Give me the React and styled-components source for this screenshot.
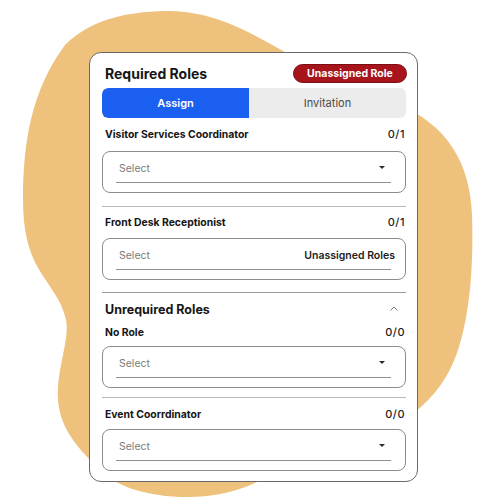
import React from "react";
import styled, { createGlobalStyle } from "styled-components";

const GlobalStyle = createGlobalStyle`
  html, body {
    margin: 0;
    padding: 0;
    background: #ffffff;
  }
  body {
    font-family: Inter, "Noto Sans", Arial, sans-serif;
    color: #1d1d1d;
  }
`;

const Stage = styled.div`
  position: relative;
  width: 500px;
  height: 500px;
  overflow: hidden;
  background: #ffffff;
  padding: 52px 0 0 89px;
  box-sizing: border-box;
`;

const Blob = styled.svg`
  position: absolute;
  left: 0;
  top: 0;
  width: 500px;
  height: 500px;
`;

const Card = styled.div`
  position: relative;
  width: 329px;
  box-sizing: border-box;
  background: #ffffff;
  border: 1px solid #6a6a6a;
  border-radius: 12px;
  padding: 10px 11px 10px 12px;
  display: flex;
  flex-direction: column;
`;

const Header = styled.div`
  height: 20px;
  display: flex;
  align-items: center;
  justify-content: space-between;
`;

const Title = styled.h1`
  margin: 0 0 0 3px;
  font-size: 14px;
  font-weight: 700;
  color: #161616;
`;

const Badge = styled.span`
  height: 19px;
  width: 114px;
  box-sizing: border-box;
  margin-right: -1px;
  border-radius: 10px;
  background: #a8141c;
  border: 1px solid #7e0d12;
  color: #ffffff;
  font-size: 10.5px;
  font-weight: 700;
  display: flex;
  align-items: center;
  justify-content: center;
`;

const Tabs = styled.div`
  margin-top: 5px;
  height: 30px;
  display: grid;
  grid-template-columns: 147px 1fr;
  border-radius: 6px;
  overflow: hidden;
  background: #ececec;
`;

const Tab = styled.div`
  display: flex;
  align-items: center;
  justify-content: center;
  font-size: 11px;
  font-weight: ${(p) => (p.active ? 600 : 400)};
  color: ${(p) => (p.active ? "#ffffff" : "#4a4a4a")};
  background: ${(p) => (p.active ? "#1b60f1" : "transparent")};
  border-radius: ${(p) => (p.active ? "6px 0 0 6px" : "0")};
`;

const RoleRow = styled.div`
  margin-top: ${(p) => p.mt || 9}px;
  height: 14px;
  padding: 0 1px 0 3px;
  display: flex;
  align-items: center;
  justify-content: space-between;
`;

const RoleName = styled.span`
  font-size: 10.4px;
  font-weight: 700;
  color: #161616;
`;

const Count = styled.span`
  font-size: 11px;
  font-weight: 500;
  color: #222;
  letter-spacing: 0.5px;
`;

const SelectBox = styled.div`
  margin-top: ${(p) => p.mt || 9}px;
  height: 42px;
  box-sizing: border-box;
  border: 1px solid #8c8c8c;
  border-radius: 8px;
  padding: 9px 14px 0 13px;
`;

const Field = styled.div`
  height: 14px;
  border-bottom: 1px solid #8f8f8f;
  display: flex;
  align-items: center;
  justify-content: space-between;
  padding: 0 0 7px 3px;
`;

const Placeholder = styled.span`
  font-size: 10.5px;
  color: #7a7a7a;
`;

const Hint = styled.span`
  font-size: 10.5px;
  font-weight: 600;
  color: #1d1d1d;
  margin-right: -4px;
`;

const Caret = styled.svg`
  width: 6px;
  height: 3px;
  margin-right: 6px;
  margin-bottom: 2px;
`;

const Divider = styled.div`
  margin-top: ${(p) => p.mt || 12}px;
  height: 1px;
  background: ${(p) => (p.dark ? "#9a9a9a" : "#b8b8b8")};
`;

const SectionHead = styled.div`
  margin-top: 8px;
  height: 16px;
  padding: 0 8px 0 3px;
  display: flex;
  align-items: center;
  justify-content: space-between;
`;

const SectionTitle = styled.h2`
  margin: 0;
  font-size: 12.5px;
  font-weight: 700;
  color: #161616;
`;

const Chevron = styled.svg`
  width: 8px;
  height: 5px;
  margin-bottom: 2px;
`;

const Select = ({ mt, hint }) => (
  <SelectBox mt={mt}>
    <Field>
      <Placeholder>Select</Placeholder>
      {hint ? (
        <Hint>{hint}</Hint>
      ) : (
        <Caret viewBox="0 0 6 3">
          <path d="M0 0 L6 0 L3 3 Z" fill="#2a2a2a" />
        </Caret>
      )}
    </Field>
  </SelectBox>
);

export default function App() {
  return (
    <>
      <GlobalStyle />
      <Stage>
        <Blob viewBox="0 0 500 500">
          <path
            fill="#eec27c"
            d="M165 11 C215 10 255 35 290 55 L400 105 C445 125 470 160 472 215 C474 275 468 320 458 350 C448 380 432 400 405 420 L265 478 C240 492 210 498 180 497 C140 495 115 485 100 470 C80 450 60 430 58 400 C56 370 70 340 66 320 C62 300 48 285 38 268 C28 250 23 230 23 200 C23 140 32 90 65 45 C90 20 125 12 165 11 Z"
          />
        </Blob>
        <Card>
          <Header>
            <Title>Required Roles</Title>
            <Badge>Unassigned Role</Badge>
          </Header>
          <Tabs>
            <Tab active>Assign</Tab>
            <Tab>Invitation</Tab>
          </Tabs>

          <RoleRow mt={9}>
            <RoleName>Visitor Services Coordinator</RoleName>
            <Count>0/1</Count>
          </RoleRow>
          <Select mt={10} />
          <Divider mt={13} />

          <RoleRow mt={8}>
            <RoleName>Front Desk Receptionist</RoleName>
            <Count>0/1</Count>
          </RoleRow>
          <Select mt={9} hint="Unassigned Roles" />
          <Divider mt={12} dark />

          <SectionHead>
            <SectionTitle>Unrequired Roles</SectionTitle>
            <Chevron viewBox="0 0 8 5">
              <polyline points="0.5,4.5 4,1 7.5,4.5" fill="none" stroke="#777" strokeWidth="1" />
            </Chevron>
          </SectionHead>
          <RoleRow mt={8}>
            <RoleName>No Role</RoleName>
            <Count>0/0</Count>
          </RoleRow>
          <Select mt={7} />
          <Divider mt={9} />

          <RoleRow mt={9}>
            <RoleName>Event Coorrdinator</RoleName>
            <Count>0/0</Count>
          </RoleRow>
          <Select mt={8} />
        </Card>
      </Stage>
    </>
  );
}
